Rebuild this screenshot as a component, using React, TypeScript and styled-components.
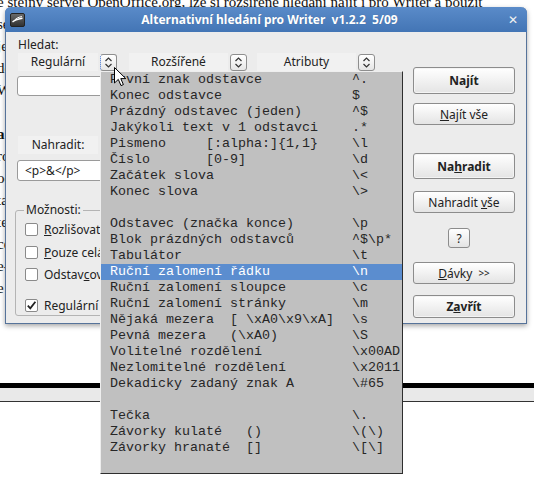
import React from 'react';
import styled, { createGlobalStyle } from 'styled-components';

const GlobalStyle = createGlobalStyle`
  html, body {
    margin: 0;
    padding: 0;
    background: #ffffff;
    overflow: hidden;
  }
`;

const regexItems: [string, string][] = [
  ['První znak odstavce', '^.'],
  ['Konec odstavce', '$'],
  ['Prázdný odstavec (jeden)', '^$'],
  ['Jakýkoli text v 1 odstavci', '.*'],
  ['Pismeno     [:alpha:]{1,1}', '\\l'],
  ['Číslo       [0-9]', '\\d'],
  ['Začátek slova', '\\<'],
  ['Konec slova', '\\>'],
  ['', ''],
  ['Odstavec (značka konce)', '\\p'],
  ['Blok prázdných odstavců', '^$\\p*'],
  ['Tabulátor', '\\t'],
  ['Ruční zalomení řádku', '\\n'],
  ['Ruční zalomení sloupce', '\\c'],
  ['Ruční zalomení stránky', '\\m'],
  ['Nějaká mezera  [ \\xA0\\x9\\xA]', '\\s'],
  ['Pevná mezera   (\\xA0)', '\\S'],
  ['Volitelné rozdělení', '\\x00AD'],
  ['Nezlomitelné rozdělení', '\\x2011'],
  ['Dekadicky zadaný znak A', '\\#65'],
  ['', ''],
  ['Tečka', '\\.'],
  ['Závorky kulaté   ()', '\\(\\)'],
  ['Závorky hranaté  []', '\\[\\]'],
];

const docLines = [
  'e stejný server OpenOffice.org, lze si rozšířené hledání najít i pro Writer a použít',
  'sestavu odstavců s textem, který se dá hledat',
  'ještě s jiným nastavením a pomocí regulárních výrazů',
  'dokument je dobré projít po částech',
  'Writer umí hledat a nahrazovat',
  '',
  'a tak dále, když je potřeba',
  'rozšířené hledání a nahrazování',
  'odstavce a znaky v textu',
  'tabulky, rámce a obrázky',
  'text odstavce s formátem',
  'celý dokument i výběr',
  'e-mail a odkazy',
  'e 6 a další',
];

function Spinner({ focus }: { focus?: boolean }) {
  return (
    <SpinButton $focus={focus}>
      <svg width="9" height="13" viewBox="0 0 9 13">
        <path d="M1.5 5 L4.5 2 L7.5 5" fill="none" stroke="#333" strokeWidth="1.2" />
        <path d="M1.5 8 L4.5 11 L7.5 8" fill="none" stroke="#333" strokeWidth="1.2" />
      </svg>
    </SpinButton>
  );
}

function CheckRow({ children, checked, top }: { children: React.ReactNode; checked?: boolean; top: number }) {
  return (
    <CheckLine $top={top}>
      <Box>
        {checked && (
          <svg width="11" height="11" viewBox="0 0 11 11">
            <path d="M1.8 5.6 L4.3 8.3 L9.4 1.8" fill="none" stroke="#222" strokeWidth="1.8" />
          </svg>
        )}
      </Box>
      <span>{children}</span>
    </CheckLine>
  );
}

export default function App() {
  return (
    <Desktop>
      <GlobalStyle />
      <Document>
        <DocText>
          {docLines.map((l, i) => (
            <DocLine key={i} $bold={i === 6}>{l || '\u00a0'}</DocLine>
          ))}
        </DocText>
        <TableHead />
      </Document>

      <Dialog>
        <TitleBar>
          <AppIcon>
            <svg width="15" height="14" viewBox="0 0 15 14">
              <defs>
                <linearGradient id="ig" x1="0" y1="0" x2="0" y2="1">
                  <stop offset="0" stopColor="#6b6b6b" />
                  <stop offset="1" stopColor="#2f2f2f" />
                </linearGradient>
              </defs>
              <rect x="0.5" y="0.5" width="14" height="13" rx="1.5" fill="url(#ig)" stroke="#222" />
              <path d="M2.5 9 C5 6.5 8 6 12.5 5.2" fill="none" stroke="#fff" strokeWidth="1.3" />
              <path d="M4.5 7.2 C6.5 5 9 4 12 3.6" fill="none" stroke="#fff" strokeWidth="1" />
            </svg>
          </AppIcon>
          <Title>Alternativní hledání pro Writer  v1.2.2  5/09</Title>
          <CloseX>✕</CloseX>
        </TitleBar>

        <DialogBody>
          <FormColumn>
            <FieldLabel>Hledat:</FieldLabel>
            <SelectorRow>
              <Selector $w={80}>Regulární</Selector>
              <Spinner focus />
              <Selector $w={99} $ml={10}>Rozšířené</Selector>
              <Spinner />
              <Selector $w={99} $ml={8}>Atributy</Selector>
              <Spinner />
            </SelectorRow>
            <TextInput $top={5} $h={20} />
            <ReplaceLabel>Nahradit:</ReplaceLabel>
            <TextInput $top={6} $h={21}>&lt;p&gt;&amp;&lt;/p&gt;</TextInput>
            <Options>
              <Legend>Možnosti:</Legend>
              <CheckRow top={3}>
                <u>R</u>ozlišovat velikost
              </CheckRow>
              <CheckRow top={7}>
                <u>P</u>ouze celá slova
              </CheckRow>
              <CheckRow top={6}>
                Odstav<u>c</u>ový režim
              </CheckRow>
              <CheckRow top={15} checked>
                Regulární výrazy
              </CheckRow>
            </Options>
          </FormColumn>

          <ButtonColumn>
            <DialogButton $bold $h={27} $top={0}>Najít</DialogButton>
            <DialogButton $h={22} $top={9}>
              <u>N</u>ajít vše
            </DialogButton>
            <DialogButton $bold $h={26} $top={28}>
              Na<u>h</u>radit
            </DialogButton>
            <DialogButton $h={22} $top={12}>
              Nahradit <u>v</u>še
            </DialogButton>
            <HelpButton>?</HelpButton>
            <DialogButton $h={22} $top={14}>
              <u>D</u>ávky <Small>&gt;&gt;</Small>
            </DialogButton>
            <DialogButton $bold $h={23} $top={11}>
              Z<u>a</u>vřít
            </DialogButton>
          </ButtonColumn>
        </DialogBody>
      </Dialog>

      <PopupMenu>
        {regexItems.map(([label, code], i) => (
          <MenuRow key={i} $active={i === 12}>
            <span>{label || '\u00a0'}</span>
            <span>{code}</span>
          </MenuRow>
        ))}
      </PopupMenu>

      <Cursor>
        <svg width="13" height="20" viewBox="0 0 13 20">
          <path
            d="M0.5 0.5 L0.5 16 L4.3 12.4 L7 18.6 L9.4 17.6 L6.8 11.6 L11.8 11.6 Z"
            fill="#fff"
            stroke="#000"
            strokeWidth="1"
            strokeLinejoin="round"
          />
        </svg>
      </Cursor>
    </Desktop>
  );
}

const Desktop = styled.div`
  position: relative;
  width: 534px;
  height: 479px;
  overflow: hidden;
  background: #ffffff;
  font-family: 'Noto Sans', 'DejaVu Sans', sans-serif;
  font-size: 12px;
  color: #222;
`;

const Document = styled.div`
  display: flex;
  flex-direction: column;
`;

const DocText = styled.div`
  height: 320px;
  width: 522px;
  margin-top: -9px;
  margin-left: -3px;
  overflow: hidden;
  font-family: 'Liberation Serif', serif;
  font-size: 15px;
  color: #111;
`;

const DocLine = styled.div<{ $bold?: boolean }>`
  line-height: 22px;
  white-space: nowrap;
  font-weight: ${({ $bold }) => ($bold ? 'bold' : 'normal')};
`;

const TableHead = styled.div`
  margin-top: 72px;
  height: 13px;
  border-top: 5px solid #000;
  border-bottom: 1px solid #333;
  background: #e9e9e9;
`;

const Dialog = styled.div`
  position: absolute;
  left: 5px;
  top: 7px;
  width: 522px;
  height: 317px;
  display: flex;
  flex-direction: column;
  background: #ececec;
  border: 1px solid #56739a;
  border-top: none;
  border-radius: 6px 6px 0 0;
  box-sizing: border-box;
  box-shadow: 0 2px 5px rgba(0, 0, 0, 0.35);
`;

const TitleBar = styled.div`
  height: 25px;
  margin: 0 -1px;
  display: flex;
  align-items: center;
  padding: 0 9px 0 5px;
  background: linear-gradient(#5a8bc9, #4375b5);
  border-radius: 6px 6px 0 0;
  color: #fff;
`;

const AppIcon = styled.div`
  width: 15px;
  height: 14px;
  display: flex;
`;

const Title = styled.div`
  flex: 1;
  text-align: center;
  font-weight: bold;
  font-size: 12px;
  white-space: pre;
  padding-left: 6px;
  text-shadow: 0 0 1px rgba(0, 0, 0, 0.2);
`;

const CloseX = styled.div`
  font-size: 12px;
  font-weight: bold;
  font-family: 'DejaVu Sans', sans-serif;
  color: #f2f2f2;
`;

const DialogBody = styled.div`
  flex: 1;
  display: grid;
  grid-template-columns: 357px 102px;
  column-gap: 38px;
  padding: 0 0 0 12px;
`;

const FormColumn = styled.div`
  display: flex;
  flex-direction: column;
  padding-top: 5px;
`;

const FieldLabel = styled.div`
  height: 16px;
  line-height: 16px;
`;

const SelectorRow = styled.div`
  display: flex;
  align-items: center;
  height: 18px;
  gap: 2px;
`;

const Selector = styled.div<{ $w: number; $ml?: number }>`
  width: ${({ $w }) => $w}px;
  margin-left: ${({ $ml = 0 }) => $ml}px;
  height: 18px;
  line-height: 18px;
  text-align: center;
  background: #f1f1f1;
`;

const SpinButton = styled.div<{ $focus?: boolean }>`
  width: 17px;
  height: 17px;
  box-sizing: border-box;
  display: flex;
  align-items: center;
  justify-content: center;
  border: 1px solid #8e8e8e;
  border-radius: 3px;
  background: linear-gradient(#ffffff, #e6e6e6);
  ${({ $focus }) => $focus && 'border-left: 1px dotted #3b6fd0;'}
`;

const TextInput = styled.div<{ $top: number; $h: number }>`
  margin-top: ${({ $top }) => $top}px;
  margin-left: -1px;
  height: ${({ $h }) => $h}px;
  box-sizing: border-box;
  border: 1px solid #9a9a9a;
  border-radius: 3px;
  background: #fff;
  padding-left: 7px;
  line-height: ${({ $h }) => $h - 2}px;
`;

const ReplaceLabel = styled.div`
  margin-top: 40px;
  width: 80px;
  height: 18px;
  line-height: 18px;
  text-align: center;
  background: #f1f1f1;
`;

const Options = styled.fieldset`
  margin: 21px 0 0 -3px;
  padding: 0 0 2px 9px;
  border: 1px solid #b4b4b4;
  border-radius: 3px;
  min-inline-size: 0;
`;

const Legend = styled.legend`
  padding: 0 2px;
  margin-left: -1px;
  line-height: 16px;
`;

const CheckLine = styled.div<{ $top: number }>`
  margin-top: ${({ $top }) => $top}px;
  display: flex;
  align-items: center;
  gap: 6px;
  height: 16px;
  white-space: nowrap;
`;

const Box = styled.div`
  width: 13px;
  height: 13px;
  box-sizing: border-box;
  border: 1px solid #8a8a8a;
  border-radius: 2px;
  background: #fff;
  display: flex;
  align-items: center;
  justify-content: center;
`;

const ButtonColumn = styled.div`
  display: flex;
  flex-direction: column;
  padding-top: 35px;
`;

const DialogButton = styled.div<{ $bold?: boolean; $h: number; $top: number }>`
  margin-top: ${({ $top }) => $top}px;
  height: ${({ $h }) => $h}px;
  box-sizing: border-box;
  display: flex;
  align-items: center;
  justify-content: center;
  border: 1px solid #8c8c8c;
  border-radius: 3px;
  background: linear-gradient(#ffffff, #e4e4e4);
  font-weight: ${({ $bold }) => ($bold ? 'bold' : 'normal')};
  white-space: pre;
  ${({ $bold }) => $bold && 'box-shadow: inset 0 0 0 1px #f4f4f4;'}
`;

const HelpButton = styled(DialogButton).attrs({ $h: 20, $top: 15 })`
  width: 22px;
  align-self: center;
  margin-left: -10px;
`;

const Small = styled.span`
  font-size: 10px;
  margin-left: 3px;
`;

const PopupMenu = styled.div`
  position: absolute;
  left: 100px;
  top: 71px;
  width: 303px;
  height: 403px;
  box-sizing: border-box;
  padding: 0 0 17px;
  background: #c0c0c0;
  border-left: 1px solid #eeeeee;
  border-top: 1px solid #eeeeee;
  border-right: 1px solid #2e2e2e;
  border-bottom: 1px solid #2e2e2e;
  font-family: 'Liberation Mono', monospace;
  font-size: 13.33px;
  color: #262626;
`;

const MenuRow = styled.div<{ $active?: boolean }>`
  display: grid;
  grid-template-columns: 242px 1fr;
  height: 16px;
  line-height: 16px;
  padding-left: 9px;
  white-space: pre;
  background: ${({ $active }) => ($active ? '#5b8dcf' : 'transparent')};
  color: ${({ $active }) => ($active ? '#ffffff' : '#262626')};
`;

const Cursor = styled.div`
  position: absolute;
  left: 114px;
  top: 67px;
  width: 13px;
  height: 20px;
`;
